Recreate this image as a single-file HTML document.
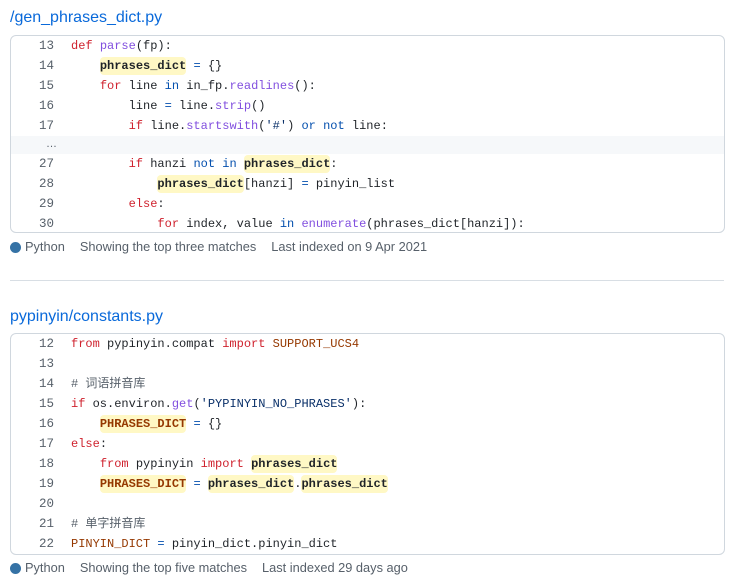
<!DOCTYPE html>
<html><head><meta charset="utf-8"><style>
body{margin:0;background:#fff;width:734px;height:584px;overflow:hidden;position:relative;font-family:"Liberation Sans","Noto Sans CJK SC",sans-serif;}
.t{position:absolute;left:10px;font-size:16px;color:#0969da;line-height:20px}
.box{position:absolute;left:10px;width:713px;border:1px solid #d0d7de;border-radius:6px;overflow:hidden}
.r{position:relative;height:20px;font-family:"Liberation Mono","Noto Sans CJK SC",monospace;font-size:12px;line-height:20px;white-space:pre;color:#1f2328}
.n{position:absolute;left:0;width:43px;text-align:right;color:#57606a;font-size:12.5px}
.c{position:absolute;left:60px}
.e{height:18px;background:#f6f8fa;position:relative;font-size:11px;color:#57606a;line-height:14px}
.k{color:#cf222e}.f{color:#8250df}.b{color:#0550ae}.s{color:#0a3069}.o{color:#953800}.cm{color:#57606a}
.h{background:#fff8c5;font-weight:bold;border-radius:4px;padding:2px 0}
.ft{position:absolute;left:10px;font-size:12.8px;color:#57606a;line-height:16px;white-space:pre;display:flex;align-items:center}
.ft span.g{margin-left:15px}
.dot{display:inline-block;width:11px;height:11px;border-radius:50%;background:#3572a5;margin-right:4px}
</style></head><body>
<div class="t" style="top:8px">/gen_phrases_dict.py</div>
<div class="box" style="top:35px;height:196px">
<div class="r"><span class="n">13</span><span class="c"><span class="k">def</span> <span class="f">parse</span>(fp):</span></div>
<div class="r"><span class="n">14</span><span class="c">    <span class="h">phrases_dict</span> <span class="b">=</span> {}</span></div>
<div class="r"><span class="n">15</span><span class="c">    <span class="k">for</span> line <span class="b">in</span> in_fp.<span class="f">readlines</span>():</span></div>
<div class="r"><span class="n">16</span><span class="c">        line <span class="b">=</span> line.<span class="f">strip</span>()</span></div>
<div class="r"><span class="n">17</span><span class="c">        <span class="k">if</span> line.<span class="f">startswith</span>(<span class="s">'#'</span>) <span class="b">or</span> <span class="b">not</span> line:</span></div>
<div class="e"><span style="position:absolute;left:35px;top:1px">…</span></div>
<div class="r"><span class="n">27</span><span class="c">        <span class="k">if</span> hanzi <span class="b">not</span> <span class="b">in</span> <span class="h">phrases_dict</span>:</span></div>
<div class="r"><span class="n">28</span><span class="c">            <span class="h">phrases_dict</span>[hanzi] <span class="b">=</span> pinyin_list</span></div>
<div class="r"><span class="n">29</span><span class="c">        <span class="k">else</span>:</span></div>
<div class="r"><span class="n">30</span><span class="c">            <span class="k">for</span> index, value <span class="b">in</span> <span class="f">enumerate</span>(phrases_dict[hanzi]):</span></div>
</div>
<div class="ft" style="top:239px"><span class="dot"></span><span>Python</span><span class="g">Showing the top three matches</span><span class="g">Last indexed on 9 Apr 2021</span></div>
<div style="position:absolute;left:10px;top:280px;width:714px;height:1px;background:#d8dee4"></div>
<div class="t" style="top:307px">pypinyin/constants.py</div>
<div class="box" style="top:333px;height:220px">
<div class="r"><span class="n">12</span><span class="c"><span class="k">from</span> pypinyin.compat <span class="k">import</span> <span class="o">SUPPORT_UCS4</span></span></div>
<div class="r"><span class="n">13</span><span class="c"></span></div>
<div class="r"><span class="n">14</span><span class="c"><span class="cm"># 词语拼音库</span></span></div>
<div class="r"><span class="n">15</span><span class="c"><span class="k">if</span> os.environ.<span class="f">get</span>(<span class="s">'PYPINYIN_NO_PHRASES'</span>):</span></div>
<div class="r"><span class="n">16</span><span class="c">    <span class="h o">PHRASES_DICT</span> <span class="b">=</span> {}</span></div>
<div class="r"><span class="n">17</span><span class="c"><span class="k">else</span>:</span></div>
<div class="r"><span class="n">18</span><span class="c">    <span class="k">from</span> pypinyin <span class="k">import</span> <span class="h">phrases_dict</span></span></div>
<div class="r"><span class="n">19</span><span class="c">    <span class="h o">PHRASES_DICT</span> <span class="b">=</span> <span class="h">phrases_dict</span>.<span class="h">phrases_dict</span></span></div>
<div class="r"><span class="n">20</span><span class="c"></span></div>
<div class="r"><span class="n">21</span><span class="c"><span class="cm"># 单字拼音库</span></span></div>
<div class="r"><span class="n">22</span><span class="c"><span class="o">PINYIN_DICT</span> <span class="b">=</span> pinyin_dict.pinyin_dict</span></div>
</div>
<div class="ft" style="top:560px"><span class="dot"></span><span>Python</span><span class="g">Showing the top five matches</span><span class="g">Last indexed 29 days ago</span></div>
</body></html>
